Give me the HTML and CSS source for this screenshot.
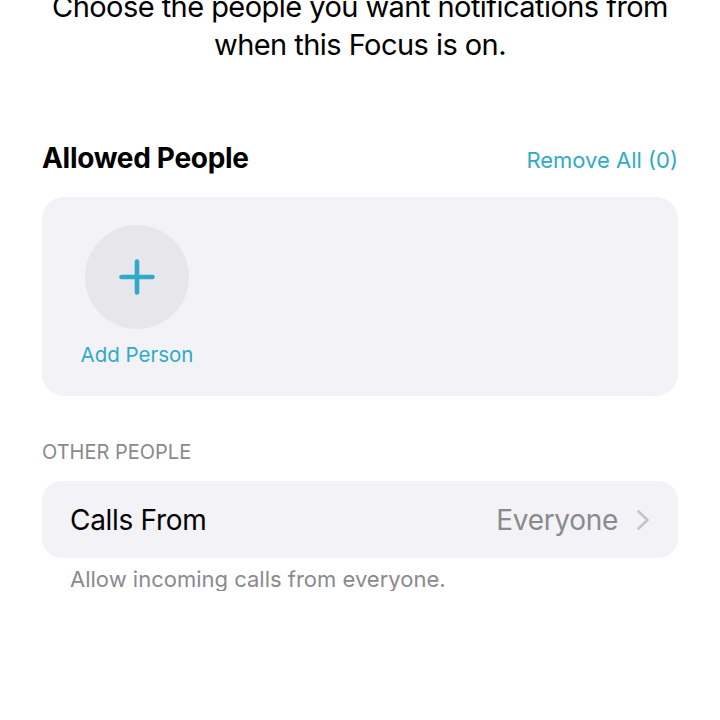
FILE: index.html
```html
<!DOCTYPE html>
<html lang="en">

<head>
    <meta charset="UTF-8">
    <meta name="viewport" content="width=device-width, initial-scale=1.0">
    <title>Focus - People</title>
    <link rel="stylesheet" href="styles.css">
</head>

<body>

    <main class="page">
        <p class="intro">Choose the people you want notifications from when this Focus is on.</p>

        <div class="section-head">
            <h2>Allowed People</h2>
            <a class="link" href="#">Remove All (0)</a>
        </div>

        <div class="card people">
            <div class="person-add">
                <div class="avatar">
                    <svg width="36" height="36" viewBox="0 0 36 36">
                        <path d="M18 2.5v31M2.5 18h31" stroke="currentColor" stroke-width="4.6" stroke-linecap="round" fill="none" />
                    </svg>
                </div>
                <span class="person-name">Add Person</span>
            </div>
        </div>

        <div class="group-label">OTHER PEOPLE</div>

        <div class="card row">
            <span class="row-title">Calls From</span>
            <span class="row-value">
                Everyone
                <svg class="chevron" width="14" height="22" viewBox="0 0 14 22">
                    <path d="M2.5 2.5l9 8.5-9 8.5" stroke="currentColor" stroke-width="2.6" stroke-linecap="round" stroke-linejoin="round" fill="none" />
                </svg>
            </span>
        </div>

        <p class="footnote">Allow incoming calls from everyone.</p>
    </main>

</body>
</html>
```

FILE: styles.css
```css
body {
    font-family: Inter, "Noto Sans", Arial, sans-serif;
    background-color: #ffffff;
    color: #000000;
    margin: 0;
}

.page {
    padding: 0 42px;
}

.intro {
    margin: -12px 0 0;
    font-size: 29px;
    line-height: 38px;
    text-align: center;
    letter-spacing: -0.55px;
}

.section-head {
    display: flex;
    justify-content: space-between;
    align-items: baseline;
    margin-top: 78px;
}

.section-head h2 {
    margin: 0;
    font-size: 28px;
    line-height: 32px;
    font-weight: 700;
    letter-spacing: -0.3px;
}

.link {
    color: #30aac8;
    text-decoration: none;
    font-size: 22px;
}

.card {
    background-color: #f2f2f7;
    border-radius: 22px;
}

.people {
    margin-top: 23px;
    padding: 28px 35px 29px;
    display: flex;
}

.person-add {
    width: 120px;
    display: flex;
    flex-direction: column;
    align-items: center;
    gap: 14px;
}

.avatar {
    width: 104px;
    height: 104px;
    border-radius: 50%;
    background-color: #e6e6eb;
    color: #30aac8;
    display: flex;
    align-items: center;
    justify-content: center;
}

.person-name {
    color: #30aac8;
    font-size: 20.5px;
    line-height: 24px;
}

.group-label {
    margin-top: 45px;
    font-size: 20px;
    line-height: 22px;
    color: #8a8a8e;
}

.row {
    margin-top: 18px;
    height: 77px;
    padding: 0 28px;
    display: flex;
    align-items: center;
    justify-content: space-between;
    border-radius: 20px;
}

.row-title {
    font-size: 28px;
    letter-spacing: -0.3px;
}

.row-value {
    display: flex;
    align-items: center;
    gap: 18px;
    font-size: 28px;
    letter-spacing: -0.3px;
    color: #8a8a8e;
}

.chevron {
    color: #c4c4c7;
}

.footnote {
    margin: 9px 0 0;
    padding-left: 28px;
    font-size: 22px;
    line-height: 24px;
    color: #8a8a8e;
}
```
